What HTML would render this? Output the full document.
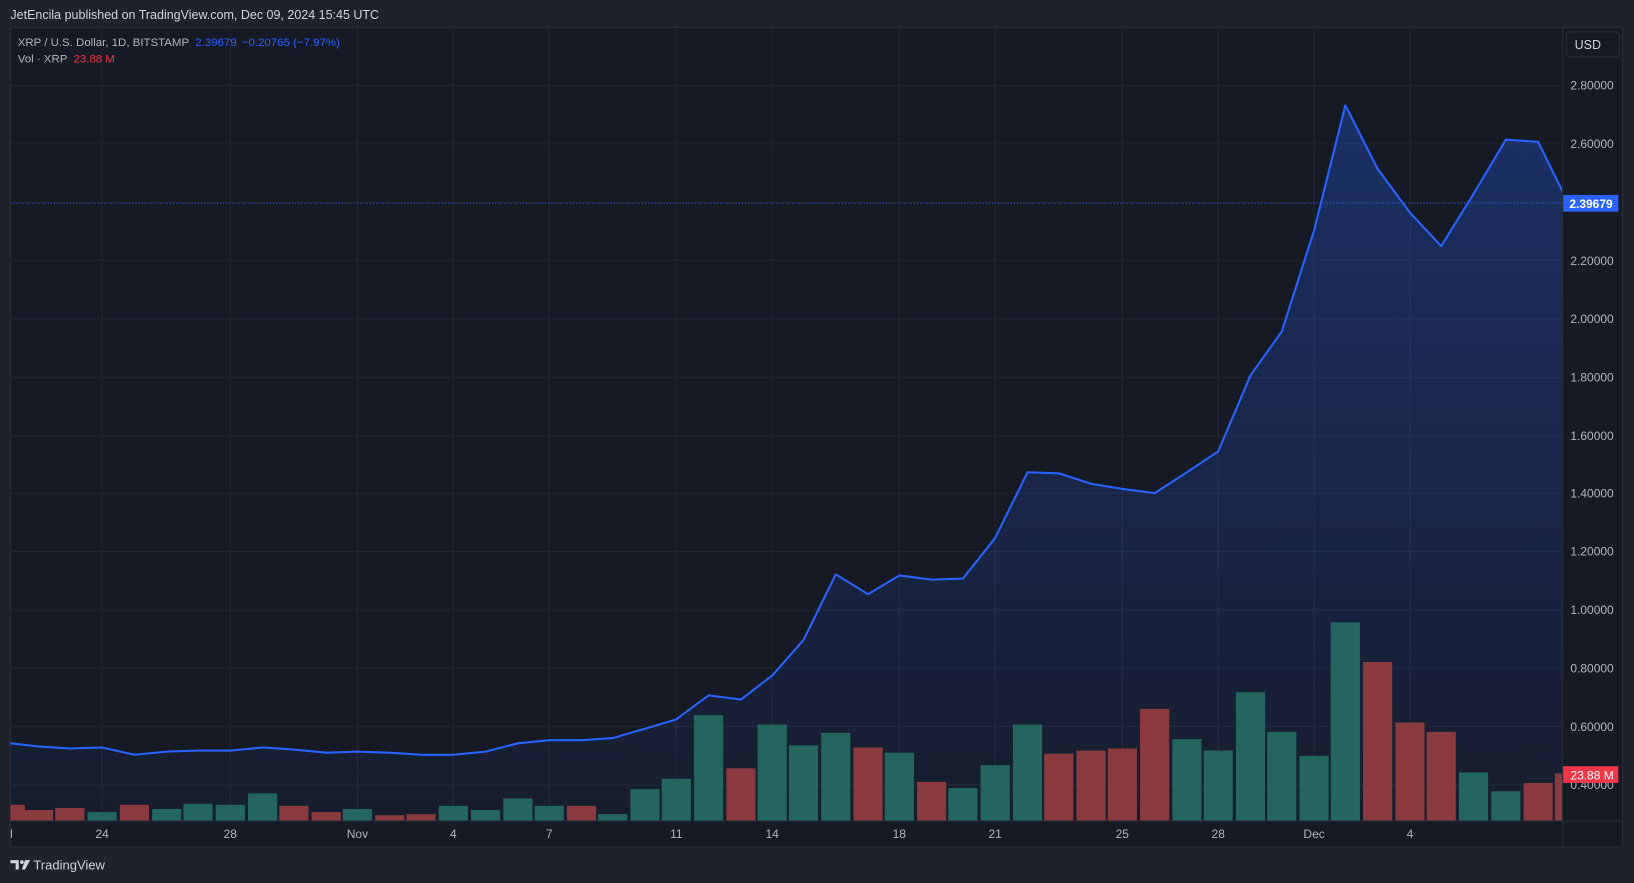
<!DOCTYPE html>
<html><head><meta charset="utf-8"><style>
html,body{margin:0;padding:0;background:#1f222b;width:1634px;height:883px;overflow:hidden}
svg{display:block}
text{font-family:"Liberation Sans",sans-serif}
</style></head><body>
<svg width="1634" height="883" viewBox="0 0 1568 847" preserveAspectRatio="none">
<defs>
<linearGradient id="g" x1="0" y1="0" x2="0" y2="1">
<stop offset="0" stop-color="#2962ff" stop-opacity="0.30"/>
<stop offset="1" stop-color="#2962ff" stop-opacity="0.04"/>
</linearGradient>
<clipPath id="c"><rect x="10" y="27" width="1489" height="760"/></clipPath>
</defs>
<rect width="1568" height="847" fill="#1f222b"/>
<text x="10" y="18" fill="#d1d4dc" font-size="12">JetEncila published on TradingView.com, Dec 09, 2024 15:45 UTC</text>
<rect x="10" y="26.5" width="1547" height="786" fill="#161a25" stroke="#2a2e39"/>
<g stroke="#232733" stroke-width="1">
<line x1="98" y1="27" x2="98" y2="787"/><line x1="221" y1="27" x2="221" y2="787"/><line x1="343" y1="27" x2="343" y2="787"/><line x1="435" y1="27" x2="435" y2="787"/><line x1="527" y1="27" x2="527" y2="787"/><line x1="649" y1="27" x2="649" y2="787"/><line x1="741" y1="27" x2="741" y2="787"/><line x1="863" y1="27" x2="863" y2="787"/><line x1="955" y1="27" x2="955" y2="787"/><line x1="1077" y1="27" x2="1077" y2="787"/><line x1="1169" y1="27" x2="1169" y2="787"/><line x1="1261" y1="27" x2="1261" y2="787"/><line x1="1353" y1="27" x2="1353" y2="787"/>
<line x1="10" y1="82" x2="1499" y2="82"/><line x1="10" y1="138" x2="1499" y2="138"/><line x1="10" y1="194" x2="1499" y2="194"/><line x1="10" y1="250" x2="1499" y2="250"/><line x1="10" y1="306" x2="1499" y2="306"/><line x1="10" y1="362" x2="1499" y2="362"/><line x1="10" y1="418" x2="1499" y2="418"/><line x1="10" y1="473" x2="1499" y2="473"/><line x1="10" y1="529" x2="1499" y2="529"/><line x1="10" y1="585" x2="1499" y2="585"/><line x1="10" y1="641" x2="1499" y2="641"/><line x1="10" y1="697" x2="1499" y2="697"/><line x1="10" y1="753" x2="1499" y2="753"/>
</g>
<g clip-path="url(#c)">
<polygon fill="url(#g)" points="10,713 37,716 67,718 98,717 129,724 160,721 190,720 221,720 252,717 282,719 313,722 343,721 374,722 404,724 435,724 466,721 497,713 527,710 558,710 588,708 619,699 649,690 680,667 711,671 741,648 771,614 802,551 833,570 863,552 894,556 924,555 955,516 986,453 1016,454 1047,464 1077,469 1108,473 1139,453 1169,433 1200,360 1230,318 1261,221 1291,101 1322,162 1353,204 1383,236 1414,186 1445,134 1476,136 1506,197 1506,787 10,787"/>
<g fill="#22665f">
<rect x="84" y="779" width="28" height="8"/><rect x="146" y="776" width="28" height="11"/><rect x="176" y="771" width="28" height="16"/><rect x="207" y="772" width="28" height="15"/><rect x="238" y="761" width="28" height="26"/><rect x="329" y="776" width="28" height="11"/><rect x="421" y="773" width="28" height="14"/><rect x="452" y="777" width="28" height="10"/><rect x="483" y="766" width="28" height="21"/><rect x="513" y="773" width="28" height="14"/><rect x="574" y="781" width="28" height="6"/><rect x="605" y="757" width="28" height="30"/><rect x="635" y="747" width="28" height="40"/><rect x="666" y="686" width="28" height="101"/><rect x="727" y="695" width="28" height="92"/><rect x="757" y="715" width="28" height="72"/><rect x="788" y="703" width="28" height="84"/><rect x="849" y="722" width="28" height="65"/><rect x="910" y="756" width="28" height="31"/><rect x="941" y="734" width="28" height="53"/><rect x="972" y="695" width="28" height="92"/><rect x="1125" y="709" width="28" height="78"/><rect x="1155" y="720" width="28" height="67"/><rect x="1186" y="664" width="28" height="123"/><rect x="1216" y="702" width="28" height="85"/><rect x="1247" y="725" width="28" height="62"/><rect x="1277" y="597" width="28" height="190"/><rect x="1400" y="741" width="28" height="46"/><rect x="1431" y="759" width="28" height="28"/>
</g>
<g fill="#893a3d">
<rect x="-4" y="772" width="28" height="15"/><rect x="23" y="777" width="28" height="10"/><rect x="53" y="775" width="28" height="12"/><rect x="115" y="772" width="28" height="15"/><rect x="268" y="773" width="28" height="14"/><rect x="299" y="779" width="28" height="8"/><rect x="360" y="782" width="28" height="5"/><rect x="390" y="781" width="28" height="6"/><rect x="544" y="773" width="28" height="14"/><rect x="697" y="737" width="28" height="50"/><rect x="819" y="717" width="28" height="70"/><rect x="880" y="750" width="28" height="37"/><rect x="1002" y="723" width="28" height="64"/><rect x="1033" y="720" width="28" height="67"/><rect x="1063" y="718" width="28" height="69"/><rect x="1094" y="680" width="28" height="107"/><rect x="1308" y="635" width="28" height="152"/><rect x="1339" y="693" width="28" height="94"/><rect x="1369" y="702" width="28" height="85"/><rect x="1462" y="751" width="28" height="36"/><rect x="1492" y="742" width="28" height="45"/>
</g>
<polyline fill="none" stroke="#2962ff" stroke-width="2" stroke-linejoin="round" points="10,713 37,716 67,718 98,717 129,724 160,721 190,720 221,720 252,717 282,719 313,722 343,721 374,722 404,724 435,724 466,721 497,713 527,710 558,710 588,708 619,699 649,690 680,667 711,671 741,648 771,614 802,551 833,570 863,552 894,556 924,555 955,516 986,453 1016,454 1047,464 1077,469 1108,473 1139,453 1169,433 1200,360 1230,318 1261,221 1291,101 1322,162 1353,204 1383,236 1414,186 1445,134 1476,136 1506,197"/>
<line x1="10" y1="195" x2="1499" y2="195" stroke="#2962ff" stroke-width="1" stroke-dasharray="1,2"/>
</g>
<line x1="1499.5" y1="27" x2="1499.5" y2="812" stroke="#2a2e39"/>
<line x1="10" y1="787.5" x2="1557" y2="787.5" stroke="#2a2e39"/>
<text x="17" y="44" fill="#b2b5be" font-size="11">XRP / U.S. Dollar, 1D, BITSTAMP <tspan fill="#2962ff" dx="3">2.39679</tspan><tspan fill="#2962ff" dx="5">−0.20765 (−7.97%)</tspan></text>
<text x="17" y="60" fill="#b2b5be" font-size="11">Vol · XRP <tspan fill="#f23645" dx="3">23.88 M</tspan></text>
<rect x="1503" y="30.5" width="51" height="24" rx="4" fill="#161a25" stroke="#2a2e39"/>
<text x="1511" y="47" fill="#d1d4dc" font-size="12">USD</text>
<g fill="#b2b5be" font-size="11.5">
<text x="1507" y="86">2.80000</text><text x="1507" y="142">2.60000</text><text x="1507" y="254">2.20000</text><text x="1507" y="310">2.00000</text><text x="1507" y="366">1.80000</text><text x="1507" y="422">1.60000</text><text x="1507" y="477">1.40000</text><text x="1507" y="533">1.20000</text><text x="1507" y="589">1.00000</text><text x="1507" y="645">0.80000</text><text x="1507" y="701">0.60000</text><text x="1507" y="757">0.40000</text>
</g>
<rect x="1500" y="187" width="53" height="16" fill="#2962ff"/>
<text x="1506" y="199.5" fill="#fff" font-size="11.5" font-weight="bold">2.39679</text>
<rect x="1500" y="735" width="53" height="16" fill="#f23645"/>
<text x="1507" y="747.5" fill="#fff" font-size="11.5">23.88 M</text>
<g fill="#b2b5be" font-size="11.5" text-anchor="middle">
<text x="11" y="804">l</text><text x="98" y="804">24</text><text x="221" y="804">28</text><text x="343" y="804">Nov</text><text x="435" y="804">4</text><text x="527" y="804">7</text><text x="649" y="804">11</text><text x="741" y="804">14</text><text x="863" y="804">18</text><text x="955" y="804">21</text><text x="1077" y="804">25</text><text x="1169" y="804">28</text><text x="1261" y="804">Dec</text><text x="1353" y="804">4</text>
</g>
<g fill="#d1d4dc">
<path d="M10 825h8v9h-3v-6h-5z"/><circle cx="21" cy="827" r="1.8"/><path d="M24 825h5l-5 9h-3z"/>
</g>
<text x="32" y="834" fill="#d1d4dc" font-size="12.5">TradingView</text>
</svg>
</body></html>
